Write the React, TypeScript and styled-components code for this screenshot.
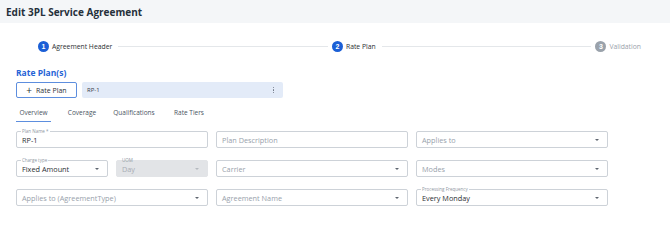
import React from "react";
import styled, { createGlobalStyle } from "styled-components";

const Global = createGlobalStyle`
  html, body { margin: 0; padding: 0; background: #fff; }
  body { font-family: "Open Sans", "Liberation Sans", sans-serif; color: #1f2933; }
  * { box-sizing: border-box; }
`;

const Page = styled.div`
  width: 670px;
  height: 248px;
  background: #fff;
  overflow: hidden;
`;

const Header = styled.div`
  height: 23px;
  background: #f4f6f8;
  padding: 1px 0 0 6px;
  display: flex;
  align-items: center;
`;

const Title = styled.h1`
  margin: 0;
  font-size: 10px;
  font-weight: 700;
  color: #25303b;
`;

const Stepper = styled.div`
  display: flex;
  align-items: center;
  padding: 0 29px 0 38px;
  margin-top: 17px;
  height: 12px;
`;

const Step = styled.div`
  display: flex;
  align-items: center;
  gap: 3px;
`;

const Circle = styled.div<{ $active: boolean }>`
  width: 11px;
  height: 11px;
  border-radius: 50%;
  background: ${(p) => (p.$active ? "#1b5fd6" : "#9aa2ab")};
  color: #fff;
  font-size: 7px;
  font-weight: 700;
  display: flex;
  align-items: center;
  justify-content: center;
  font-family: "Liberation Sans", sans-serif;
`;

const StepLabel = styled.span<{ $active: boolean }>`
  font-size: 6.8px;
  color: ${(p) => (p.$active ? "#2b2f33" : "#9aa2ab")};
`;

const Line = styled.div`
  flex: 1;
  height: 1px;
  background: #e4e7ea;
  margin: 0 4px 0 6px;
`;

const Section = styled.div`
  padding: 0 16px;
`;

const SectionTitle = styled.div`
  margin-top: 16px;
  font-size: 8.5px;
  font-weight: 700;
  color: #2563d6;
  height: 10px;
  line-height: 10px;
`;

const PlanBar = styled.div`
  display: flex;
  gap: 5px;
  margin-top: 4px;
`;

const AddButton = styled.button`
  width: 61px;
  height: 16px;
  border: 1px solid #5d8ede;
  border-radius: 2px;
  background: #fff;
  display: flex;
  align-items: center;
  justify-content: center;
  gap: 4px;
  padding: 0;
  font-family: inherit;
  font-size: 7px;
  color: #2b2f33;
`;

const Plus = styled.span`
  font-size: 10px;
  line-height: 10px;
  font-weight: 400;
`;

const Chip = styled.div`
  width: 201px;
  height: 16px;
  background: #e3ebf8;
  border-radius: 2px;
  display: flex;
  align-items: center;
  justify-content: space-between;
  padding: 0 9px 0 5px;
  font-size: 6px;
  color: #3a4048;
`;

const Kebab = styled.div`
  display: flex;
  flex-direction: column;
  gap: 1px;
  span {
    width: 1.3px;
    height: 1.3px;
    background: #6b7280;
    border-radius: 50%;
  }
`;

const Tabs = styled.div`
  display: flex;
  margin-top: 7px;
  height: 17px;
`;

const Tab = styled.div<{ $active?: boolean; $w: number }>`
  width: ${(p) => p.$w}px;
  font-size: 6.5px;
  color: #4b5563;
  text-align: center;
  padding-top: 3px;
  border-bottom: 1.5px solid ${(p) => (p.$active ? "#5d8ede" : "transparent")};
`;

const Form = styled.div`
  display: grid;
  grid-template-columns: 192px 192px 192px;
  column-gap: 8px;
  row-gap: 12px;
  margin-top: 9px;
`;

const Split = styled.div`
  display: grid;
  grid-template-columns: 92px 92px;
  column-gap: 8px;
`;

const Field = styled.div<{ $disabled?: boolean }>`
  position: relative;
  height: 17px;
  border: 1px solid ${(p) => (p.$disabled ? "#e2e4e7" : "#cdd2d8")};
  background: ${(p) => (p.$disabled ? "#e2e4e7" : "#fff")};
  border-radius: 2px;
  display: flex;
  align-items: center;
  justify-content: space-between;
  padding: 0 8px 0 5px;
`;

const Value = styled.span<{ $placeholder?: boolean; $disabled?: boolean }>`
  font-size: 7.3px;
  color: ${(p) => (p.$disabled ? "#a7adb4" : p.$placeholder ? "#98a1ab" : "#2b2f33")};
  white-space: nowrap;
`;

const Legend = styled.span<{ $disabled?: boolean }>`
  position: absolute;
  top: -3.5px;
  left: 4px;
  padding: 0 1px;
  font-size: 4.5px;
  line-height: 5px;
  color: #8e969f;
  background: ${(p) => (p.$disabled ? "transparent" : "#fff")};
`;

const Caret = styled.span<{ $disabled?: boolean }>`
  width: 0;
  height: 0;
  border-left: 2.5px solid transparent;
  border-right: 2.5px solid transparent;
  border-top: 2.5px solid ${(p) => (p.$disabled ? "#b5bac0" : "#5f6670")};
`;

type FP = {
  label?: string;
  value: string;
  placeholder?: boolean;
  select?: boolean;
  disabled?: boolean;
};

const FormField = ({ label, value, placeholder, select, disabled }: FP) => (
  <Field $disabled={disabled}>
    {label && <Legend $disabled={disabled}>{label}</Legend>}
    <Value $placeholder={placeholder} $disabled={disabled}>
      {value}
    </Value>
    {select && <Caret $disabled={disabled} />}
  </Field>
);

export default function App() {
  return (
    <>
      <Global />
      <Page>
        <Header>
          <Title>Edit 3PL Service Agreement</Title>
        </Header>
        <Stepper>
          <Step>
            <Circle $active>1</Circle>
            <StepLabel $active>Agreement Header</StepLabel>
          </Step>
          <Line />
          <Step>
            <Circle $active>2</Circle>
            <StepLabel $active>Rate Plan</StepLabel>
          </Step>
          <Line />
          <Step>
            <Circle $active={false}>3</Circle>
            <StepLabel $active={false}>Validation</StepLabel>
          </Step>
        </Stepper>
        <Section>
          <SectionTitle>Rate Plan(s)</SectionTitle>
          <PlanBar>
            <AddButton>
              <Plus>+</Plus>Rate Plan
            </AddButton>
            <Chip>
              RP-1
              <Kebab>
                <span />
                <span />
                <span />
              </Kebab>
            </Chip>
          </PlanBar>
          <Tabs>
            <Tab $active $w={35}>Overview</Tab>
            <Tab $w={62}>Coverage</Tab>
            <Tab $w={42}>Qualifications</Tab>
            <Tab $w={68}>Rate Tiers</Tab>
          </Tabs>
          <Form>
            <FormField label="Plan Name *" value="RP-1" />
            <FormField value="Plan Description" placeholder />
            <FormField value="Applies to" placeholder select />
            <Split>
              <FormField label="Charge type" value="Fixed Amount" select />
              <FormField label="UOM" value="Day" select disabled />
            </Split>
            <FormField value="Carrier" placeholder select />
            <FormField value="Modes" placeholder select />
            <FormField value="Applies to (AgreementType)" placeholder select />
            <FormField value="Agreement Name" placeholder select />
            <FormField label="Processing Frequency" value="Every Monday" select />
          </Form>
        </Section>
      </Page>
    </>
  );
}
